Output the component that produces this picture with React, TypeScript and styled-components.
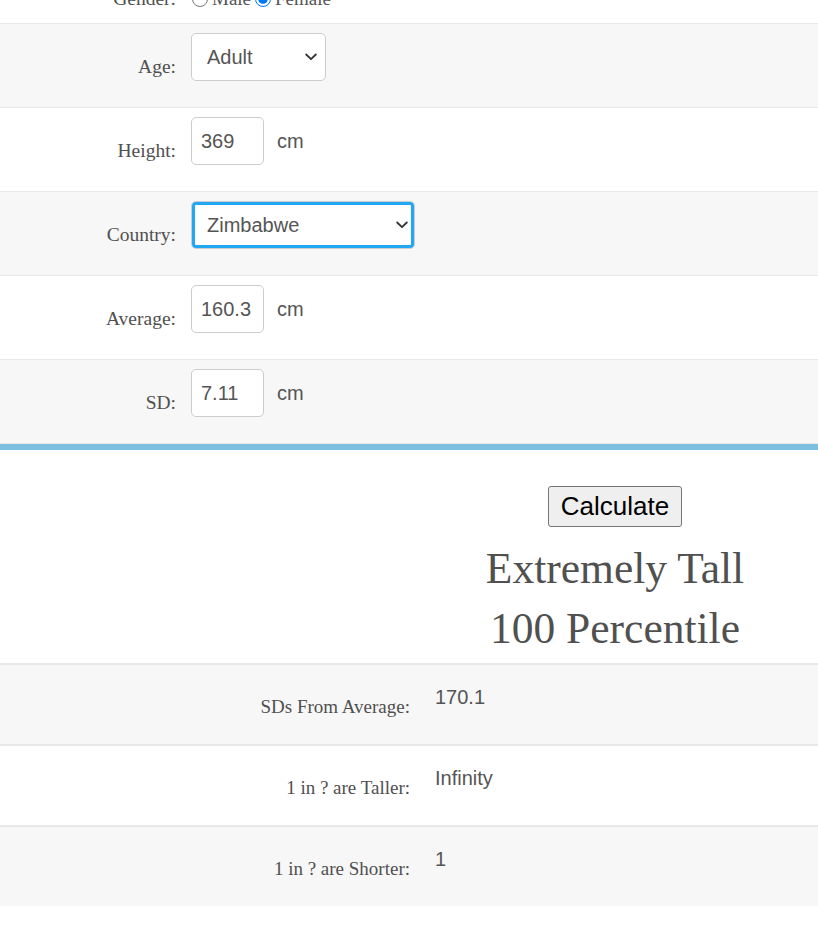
import React from "react";
import styled, { createGlobalStyle } from "styled-components";

const Global = createGlobalStyle`
  html, body { margin: 0; padding: 0; background: #fff; }
  body { font-family: "Liberation Serif", "Times New Roman", serif; color: #555; overflow: hidden; }
`;

const Page = styled.div`
  margin-top: -39px;
  width: 818px;
`;

const FormRow = styled.div<{ $shade?: boolean }>`
  display: flex;
  align-items: flex-start;
  height: 83px;
  box-sizing: content-box;
  padding: 0;
  border-bottom: 1px solid #e8e8e8;
  background: ${(p) => (p.$shade ? "#f7f7f7" : "#ffffff")};
`;

const GenderRow = styled.div`
  display: flex;
  align-items: flex-end;
  height: 63px;
  box-sizing: border-box;
  padding-bottom: 16px;
  border-bottom: 1px solid #e8e8e8;
  background: #fff;
`;

const Label = styled.label`
  flex: 0 0 176px;
  text-align: right;
  font-size: 19.5px;
  line-height: 24px;
  padding-top: 31px;
  color: #505050;
`;

const GenderLabel = styled(Label)`
  padding-top: 0;
  margin-bottom: -4px;
`;

const Field = styled.div`
  display: flex;
  align-items: center;
  margin-left: 15px;
  padding-top: 9px;
`;

const RadioGroup = styled.div`
  display: flex;
  align-items: flex-end;
  margin-left: 15px;
  font-size: 19px;
  line-height: 24px;
`;

const Radio = styled.input.attrs({ type: "radio" })`
  width: 16px;
  height: 16px;
  margin: 0 4px 0 1px;
  accent-color: #0075ff;
`;

const RadioText = styled.span`
  margin-bottom: -4px;
  margin-right: 3px;
`;

const TextInput = styled.input<{ $w: number }>`
  width: ${(p) => p.$w}px;
  height: 48px;
  box-sizing: border-box;
  border: 1px solid #cccccc;
  border-radius: 5px;
  padding: 0 9px;
  font-family: "Liberation Sans", Arial, sans-serif;
  font-size: 20px;
  color: #555;
  background: #fff;
  outline: none;
`;

const Unit = styled.span`
  margin-left: 13px;
  font-family: "Liberation Sans", Arial, sans-serif;
  font-size: 20px;
  line-height: 23px;
  color: #555;
`;

const SelectWrap = styled.div`
  position: relative;
  display: inline-block;
`;

const Select = styled.select<{ $w: number; $focus?: boolean }>`
  appearance: none;
  -webkit-appearance: none;
  width: ${(p) => p.$w}px;
  height: 48px;
  box-sizing: border-box;
  border: 1px solid #cccccc;
  border-radius: 5px;
  padding: 0 30px 0 15px;
  font-family: "Liberation Sans", Arial, sans-serif;
  font-size: 20px;
  color: #555;
  background: #fff;
  outline: ${(p) => (p.$focus ? "3px solid #22a7f5" : "none")};
  outline-offset: -4px;
`;

const Chevron = styled.svg<{ $right: number }>`
  position: absolute;
  right: ${(p) => p.$right}px;
  top: 20px;
  width: 12px;
  height: 8px;
  pointer-events: none;
`;

const BlueBar = styled.div`
  height: 6px;
  background: #7bc0e0;
`;

const ResultSection = styled.div`
  display: grid;
  grid-template-columns: 412px 1fr;
  height: 213px;
  box-sizing: border-box;
`;

const ResultCol = styled.div`
  display: flex;
  flex-direction: column;
  align-items: center;
  padding-top: 36px;
`;

const CalcButton = styled.button`
  height: 41px;
  box-sizing: border-box;
  padding: 0 12px;
  font-family: "Liberation Sans", Arial, sans-serif;
  font-size: 26px;
  color: #000;
  background: #efefef;
  border: 1px solid #767676;
  border-radius: 3px;
`;

const Verdict = styled.div`
  margin-top: 11px;
  font-size: 43.5px;
  line-height: 60px;
  text-align: center;
  color: #505050;
`;

const Results = styled.div`
  border-top: 2px solid #e8e8e8;
`;

const ResultRow = styled.div<{ $shade?: boolean }>`
  display: grid;
  grid-template-columns: 410px 1fr;
  height: 79px;
  background: ${(p) => (p.$shade ? "#f7f7f7" : "#ffffff")};
  & + & {
    border-top: 2px solid #e8e8e8;
  }
`;

const ResultLabel = styled.div`
  text-align: right;
  font-size: 19px;
  line-height: 24px;
  padding-top: 30px;
  color: #505050;
`;

const ResultValue = styled.div`
  padding-left: 25px;
  padding-top: 21px;
  font-family: "Liberation Sans", Arial, sans-serif;
  font-size: 20px;
  line-height: 23px;
  color: #555;
`;

const ChevronIcon: React.FC<{ right: number }> = ({ right }) => (
  <Chevron $right={right} viewBox="0 0 12 8">
    <path d="M1.2 1.5 L6 6.2 L10.8 1.5" fill="none" stroke="#333" strokeWidth="1.8" strokeLinecap="round" strokeLinejoin="round" />
  </Chevron>
);

export default function App() {
  return (
    <>
      <Global />
      <Page>
        <GenderRow>
          <GenderLabel>Gender:</GenderLabel>
          <RadioGroup>
            <Radio name="g" />
            <RadioText>Male</RadioText>
            <Radio name="g" defaultChecked />
            <RadioText>Female</RadioText>
          </RadioGroup>
        </GenderRow>
        <FormRow $shade>
          <Label>Age:</Label>
          <Field>
            <SelectWrap>
              <Select $w={135} defaultValue="Adult">
                <option>Adult</option>
                <option>Child</option>
              </Select>
              <ChevronIcon right={9} />
            </SelectWrap>
          </Field>
        </FormRow>
        <FormRow>
          <Label>Height:</Label>
          <Field>
            <TextInput $w={73} defaultValue="369" />
            <Unit>cm</Unit>
          </Field>
        </FormRow>
        <FormRow $shade>
          <Label>Country:</Label>
          <Field>
            <SelectWrap>
              <Select $w={224} $focus defaultValue="Zimbabwe">
                <option>Zimbabwe</option>
              </Select>
              <ChevronIcon right={7} />
            </SelectWrap>
          </Field>
        </FormRow>
        <FormRow>
          <Label>Average:</Label>
          <Field>
            <TextInput $w={73} defaultValue="160.3" />
            <Unit>cm</Unit>
          </Field>
        </FormRow>
        <FormRow $shade>
          <Label>SD:</Label>
          <Field>
            <TextInput $w={73} defaultValue="7.11" />
            <Unit>cm</Unit>
          </Field>
        </FormRow>
        <BlueBar />
        <ResultSection>
          <div />
          <ResultCol>
            <CalcButton>Calculate</CalcButton>
            <Verdict>
              Extremely Tall
              <br />
              100 Percentile
            </Verdict>
          </ResultCol>
        </ResultSection>
        <Results>
          <ResultRow $shade>
            <ResultLabel>SDs From Average:</ResultLabel>
            <ResultValue>170.1</ResultValue>
          </ResultRow>
          <ResultRow>
            <ResultLabel>1 in ? are Taller:</ResultLabel>
            <ResultValue>Infinity</ResultValue>
          </ResultRow>
          <ResultRow $shade>
            <ResultLabel>1 in ? are Shorter:</ResultLabel>
            <ResultValue>1</ResultValue>
          </ResultRow>
        </Results>
      </Page>
    </>
  );
}
